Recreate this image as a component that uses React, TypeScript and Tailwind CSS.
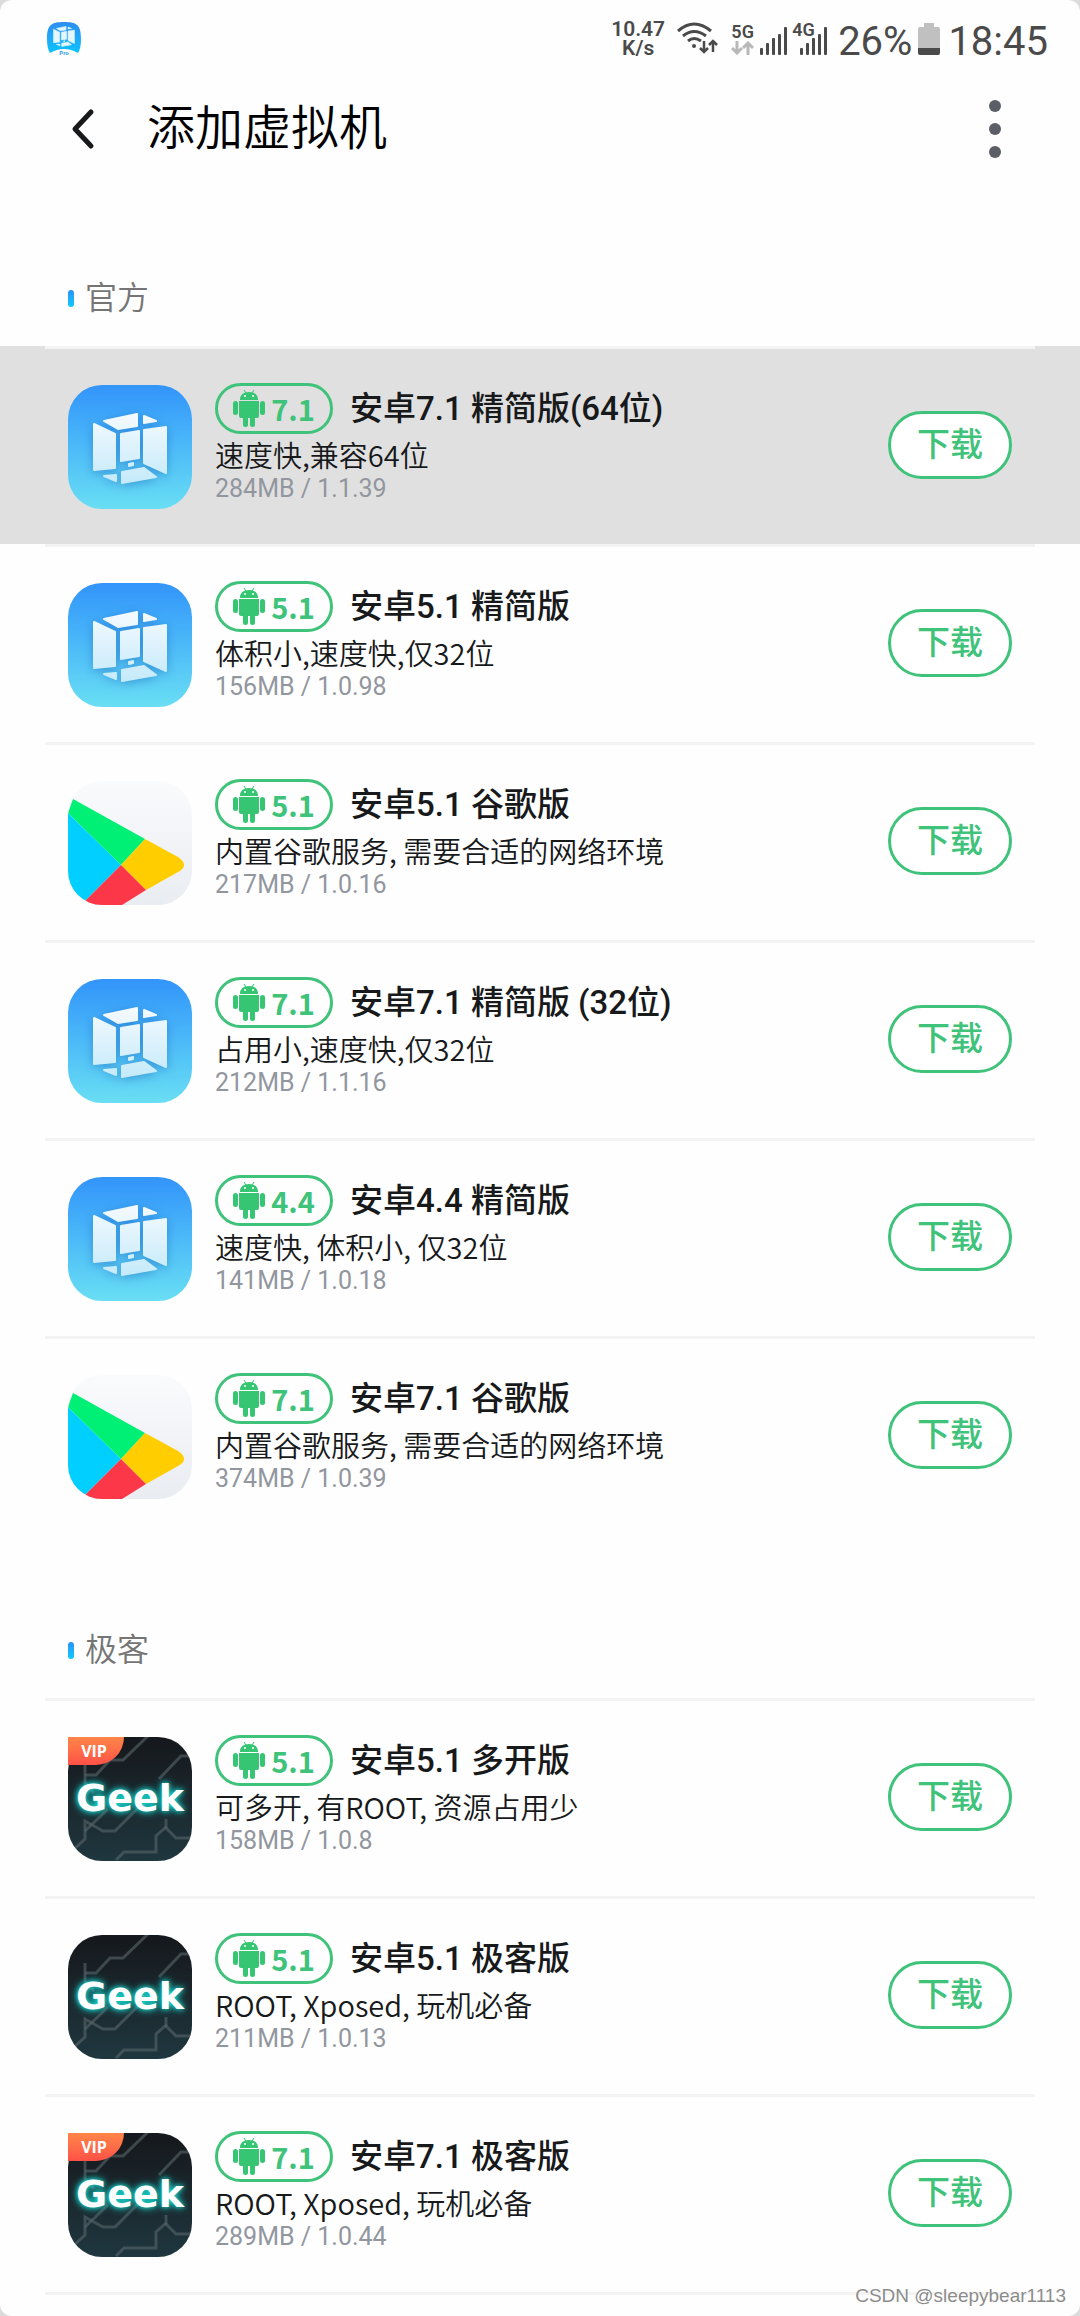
import { useState } from "react";

type Rom = {
  logo: "vm" | "play" | "geek";
  vip?: boolean;
  android: string;
  name: string;
  desc: string;
  size: string;
};

const official: Rom[] = [
  { logo: "vm", android: "7.1", name: "安卓7.1 精简版(64位)", desc: "速度快,兼容64位", size: "284MB / 1.1.39" },
  { logo: "vm", android: "5.1", name: "安卓5.1 精简版", desc: "体积小,速度快,仅32位", size: "156MB / 1.0.98" },
  { logo: "play", android: "5.1", name: "安卓5.1 谷歌版", desc: "内置谷歌服务, 需要合适的网络环境", size: "217MB / 1.0.16" },
  { logo: "vm", android: "7.1", name: "安卓7.1 精简版 (32位)", desc: "占用小,速度快,仅32位", size: "212MB / 1.1.16" },
  { logo: "vm", android: "4.4", name: "安卓4.4 精简版", desc: "速度快, 体积小, 仅32位", size: "141MB / 1.0.18" },
  { logo: "play", android: "7.1", name: "安卓7.1 谷歌版", desc: "内置谷歌服务, 需要合适的网络环境", size: "374MB / 1.0.39" },
];

const geek: Rom[] = [
  { logo: "geek", vip: true, android: "5.1", name: "安卓5.1 多开版", desc: "可多开, 有ROOT, 资源占用少", size: "158MB / 1.0.8" },
  { logo: "geek", android: "5.1", name: "安卓5.1 极客版", desc: "ROOT, Xposed, 玩机必备", size: "211MB / 1.0.13" },
  { logo: "geek", vip: true, android: "7.1", name: "安卓7.1 极客版", desc: "ROOT, Xposed, 玩机必备", size: "289MB / 1.0.44" },
];

function Cube() {
  return (
    <g strokeWidth="2" strokeLinejoin="round">
      <path d="M36 36 L69 29 V41 L50 44 Z" />
      <path d="M76 31 L88 36 L76 38 Z" />
      <path d="M26 39 L47 49 V83 L26 85 Z" />
      <path d="M53 49 L71 46 V73 L53 76 Z" />
      <path d="M76 45 L98 42 V88 L76 78 Z" />
      <path d="M61 79 L65 78 V80 L61 81 Z" />
      <path d="M54 87 L76 83 L88 92 L54 98 Z" />
      <path d="M36 91 L48 90 V96 Z" />
    </g>
  );
}

function VmLogo() {
  return (
    <svg viewBox="0 0 124 124" className="size-full bg-linear-to-b from-[#3394fa] to-[#69def3]" aria-hidden="true">
      <defs>
        <linearGradient id="cube" x1="0" y1="28" x2="0" y2="98" gradientUnits="userSpaceOnUse">
          <stop stopColor="#f5faff" />
          <stop offset="1" stopColor="#c5eafa" />
        </linearGradient>
      </defs>
      <g fill="url(#cube)" stroke="url(#cube)" className="drop-shadow-[0_2px_5px_rgba(20,90,180,0.45)]">
        <Cube />
      </g>
    </svg>
  );
}

function PlayLogo() {
  return (
    <svg viewBox="0 0 124 124" className="size-full bg-linear-to-b from-[#fafbfd] to-[#e9ecf1]" aria-hidden="true">
      <path d="M0 32 L53 84 L18 119 L0 124 Z" fill="#00cfff" />
      <path d="M5 18 L77 58 L53 84 L0 32 Z" fill="#00f076" />
      <path d="M77 58 L110 76 Q116 80 116 84 Q116 88 110 91 L78 109 L53 84 Z" fill="#ffcd00" />
      <path d="M53 84 L78 109 L54 124 H14 L18 119 Z" fill="#fb3748" />
    </svg>
  );
}

function GeekLogo() {
  return (
    <>
      <svg viewBox="0 0 124 124" className="size-full bg-linear-to-b from-[#15181c] to-[#1f373f]" aria-hidden="true">
        <g fill="none" stroke="#59666b" strokeOpacity="0.6" strokeWidth="3">
          <path d="M81 -2 L55 23 H42 L28 38 H17" />
          <path d="M17 28 V46 L26 56" />
          <path d="M124 19 H113 L91 42" />
          <path d="M73 68 L47 94 H35 L17 84 V102 L5 113" />
          <path d="M17 94 L40 72" />
          <path d="M98 82 V90 L88 99 V115 H56 L48 123" />
          <path d="M97 90 L108 101 H124" />
        </g>
      </svg>
      <span className="absolute inset-0 flex items-center justify-center font-['DejaVu_Sans',sans-serif] text-[38px] font-bold text-white text-shadow-[0_0_5px_#19d9d0,0_0_8px_#19d9d0]">
        Geek
      </span>
    </>
  );
}

function AndroidIcon() {
  return (
    <svg viewBox="0 0 32 38" className="h-[38px] w-8 shrink-0" aria-hidden="true">
      <g fill="#36c572">
        <path d="M7 11 Q7 3 16 3 Q25 3 25 11 Z" />
        <path d="M11 1 L13 4 M21 1 L19 4" stroke="#36c572" strokeWidth="1" />
        <path d="M6 12 H26 V27 Q26 29 24 29 H8 Q6 29 6 27 Z" />
        <rect x="0" y="12" width="5" height="14" rx="2.500" />
        <rect x="27" y="12" width="5" height="14" rx="2.500" />
        <rect x="10" y="26" width="5" height="12" rx="2.500" />
        <rect x="17" y="26" width="5" height="12" rx="2.500" />
      </g>
      <circle cx="12" cy="7" r="1" fill="#fff" />
      <circle cx="20" cy="7" r="1" fill="#fff" />
    </svg>
  );
}

function ProIcon() {
  return (
    <svg viewBox="0 0 36 36" className="size-9" aria-hidden="true">
      <defs>
        <linearGradient id="pro" x1="0" y1="0" x2="0" y2="1">
          <stop stopColor="#2f8df0" />
          <stop offset="1" stopColor="#0cc4ff" />
        </linearGradient>
      </defs>
      <path d="M18 1 C31 1 35 4 35 18 C35 24 34 29 32 32 Q18 24 4 32 C2 29 1 24 1 18 C1 4 5 1 18 1 Z" fill="url(#pro)" />
      <g transform="translate(0 -3) scale(0.29)" fill="#e4f6ff" stroke="#e4f6ff">
        <Cube />
      </g>
      <text x="18" y="34" textAnchor="middle" className="fill-[#2f9fe8] font-[Roboto] text-[6px] font-bold">
        Pro
      </text>
    </svg>
  );
}

function Bars() {
  return (
    <svg viewBox="0 0 28 28" className="size-7" fill="#4a4a4a" aria-hidden="true">
      <rect x="0" y="21" width="3" height="7" rx="1" />
      <rect x="6" y="16" width="3" height="12" rx="1" />
      <rect x="12" y="11" width="3" height="17" rx="1" />
      <rect x="18" y="7" width="3" height="21" rx="1" />
      <rect x="24" y="0" width="3" height="28" rx="1" />
    </svg>
  );
}

function StatusBar() {
  return (
    <div className="flex h-[78px] items-center justify-between pr-8 pl-[46px] text-[#4a4a4a]">
      <ProIcon />
      <div className="flex items-center">
        <div className="text-center text-[21px] leading-[19px] font-semibold">
          <div>10.47</div>
          <div>K/s</div>
        </div>
        <svg viewBox="0 0 42 34" className="ml-3 h-[34px] w-[42px]" fill="none" stroke="#4a4a4a" aria-hidden="true">
          <path d="M1 9 Q17 -5 34 9 M6 14 Q17 5 29 14 M11 19 Q17 14 24 19" strokeWidth="3" />
          <circle cx="17" cy="24" r="2" fill="#4a4a4a" stroke="none" />
          <path d="M27 19 V30 M23 26 L27 30 L31 26 M36 30 V19 M32 23 L36 19 L40 23" strokeWidth="2.500" />
        </svg>
        <div className="ml-3 flex flex-col items-center text-[18px] leading-[18px] font-semibold">
          5G
          <svg viewBox="0 0 23 14" className="h-3.5 w-[23px]" fill="none" stroke="#b8b8b8" strokeWidth="3" aria-hidden="true">
            <path d="M6 0 V12 M1 7 L6 12 L11 7 M17 14 V2 M12 7 L17 2 L22 7" />
          </svg>
        </div>
        <div className="ml-1.5 pt-1">
          <Bars />
        </div>
        <div className="relative ml-3 pt-1">
          <Bars />
          <span className="absolute -top-0.5 -left-2 text-[18px] leading-[18px] font-semibold text-shadow-[0_0_1px_#fff,0_0_2px_#fff]">
            4G
          </span>
        </div>
        <span className="ml-2.5 pt-1.5 text-[40px] leading-12">26%</span>
        <svg viewBox="0 0 22 32" className="mr-2 ml-1.5 h-8 w-[22px]" aria-hidden="true">
          <path d="M6 0 H16 V4 H20 Q22 4 22 6 V25 H0 V6 Q0 4 2 4 H6 Z" fill="#c0c0c0" />
          <path d="M0 25 H22 V30 Q22 32 20 32 H2 Q0 32 0 30 Z" fill="#4a4a4a" />
        </svg>
        <span className="pt-1.5 text-[40px] leading-12">18:45</span>
      </div>
    </div>
  );
}

function RomRow({ rom, active, onPress }: { rom: Rom; active: boolean; onPress: () => void }) {
  return (
    <li className={active ? "bg-[#e0e0e0]" : ""} onClick={onPress}>
      <div className="mx-[45px] h-[3px] bg-[#f3f3f3]" />
      <div className="flex items-center px-[68px] py-[34px]">
        <div className="relative shrink-0">
          <div className="relative size-[124px] overflow-hidden rounded-[34px]">
            {rom.logo === "vm" && <VmLogo />}
            {rom.logo === "play" && <PlayLogo />}
            {rom.logo === "geek" && <GeekLogo />}
          </div>
          {rom.vip && (
            <span className="absolute top-0 left-0 flex h-7 w-14 items-center justify-center rounded-br-[28px] bg-linear-to-b from-[#ff8548] to-[#ff5047] pr-1 font-['Open_Sans',sans-serif] text-[16px] font-bold text-white">
              VIP
            </span>
          )}
        </div>
        <div className="ml-[23px] min-w-0 flex-1 pb-1.5">
          <div className="flex items-center gap-[17px]">
            <span className="flex h-[51px] w-[118px] items-center justify-center gap-1.5 rounded-full border-3 border-[#3fc279] pb-0.5 font-['Noto_Sans_CJK_SC',sans-serif] text-[29px] leading-10 font-bold text-[#3fc279]">
              <AndroidIcon />
              {rom.android}
            </span>
            <h3 className="text-[33px] leading-10 font-medium">{rom.name}</h3>
          </div>
          <p className="font-['Noto_Sans_CJK_SC',sans-serif] text-[29px] leading-10 font-[350]">{rom.desc}</p>
          <p className="text-[25px] leading-[30px] text-[#92969e]">{rom.size}</p>
        </div>
        <button className="mb-1 h-[68px] w-[124px] rounded-full border-3 border-[#3fc279] bg-white text-[33px] font-medium text-[#3fc279]">
          下载
        </button>
      </div>
    </li>
  );
}

export default function App() {
  const [active, setActive] = useState(official[0].name);

  const groups = [
    { title: "官方", roms: official },
    { title: "极客", roms: geek },
  ];

  return (
    <div className="relative bg-[#dcdcdc] font-[Roboto,'Noto_Sans_CJK_SC',sans-serif]">
      <main className="min-h-screen rounded-xl bg-[#fefefe] text-[#17191b]">
        <StatusBar />
        <header className="flex h-[102px] items-center pr-[68px] pl-[60px]">
          <button aria-label="返回" className="flex h-14 w-[46px] items-center justify-center">
            <svg viewBox="0 0 24 42" className="h-[42px] w-6" fill="none" stroke="#17191b" strokeWidth="5" strokeLinecap="round" strokeLinejoin="round">
              <path d="M20 4 L4 21 L20 38" />
            </svg>
          </button>
          <h1 className="ml-[41px] flex-1 text-[48px] leading-none font-[350] text-black">添加虚拟机</h1>
          <button aria-label="更多" className="flex w-[34px] flex-col items-center gap-[11px]">
            <span className="size-3 rounded-full bg-[#5b5e66]" />
            <span className="size-3 rounded-full bg-[#5b5e66]" />
            <span className="size-3 rounded-full bg-[#5b5e66]" />
          </button>
        </header>

        <div className="flex flex-col gap-[68px] pt-[70px]">
          {groups.map((group) => (
            <section key={group.title}>
              <h2 className="flex h-24 items-center gap-[11px] px-[68px] text-[32px] font-[350] text-[#757575]">
                <span className="h-[17px] w-1.5 rounded-full bg-linear-to-b from-[#2b90f5] to-[#08cbff]" />
                {group.title}
              </h2>
              <ul>
                {group.roms.map((rom) => (
                  <RomRow key={rom.name} rom={rom} active={active === rom.name} onPress={() => setActive(rom.name)} />
                ))}
              </ul>
            </section>
          ))}
        </div>

        <div className="px-[45px] pb-[21px]">
          <div className="h-[3px] bg-[#f3f3f3]" />
        </div>
      </main>
      <span className="absolute right-3.5 bottom-2 font-['Liberation_Sans',sans-serif] text-[19px] leading-6 text-[#8c8c8c] text-shadow-[0_0_2px_#fff]">
        CSDN @sleepybear1113
      </span>
    </div>
  );
}
